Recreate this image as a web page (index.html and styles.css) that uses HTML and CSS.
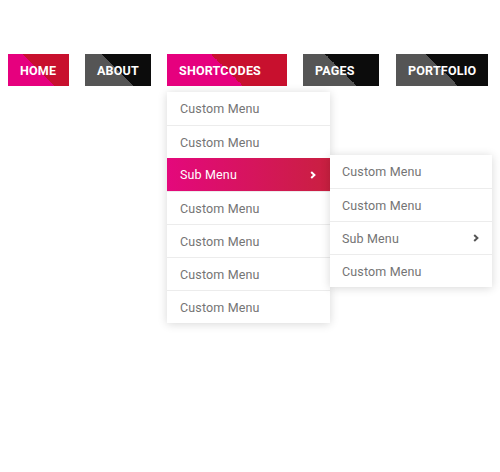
FILE: index.html
```html
<!DOCTYPE html>
<html>
<head>
<meta charset="utf-8">
<link rel="stylesheet" href="styles.css">
</head>
<body>
<nav class="nav">
  <ul class="menu">
    <li class="item w-home"><a class="btn btn-red" href="#">HOME</a></li>
    <li class="item w-about"><a class="btn btn-dark" href="#">ABOUT</a></li>
    <li class="item w-short">
      <a class="btn btn-red" href="#">SHORTCODES</a>
      <ul class="dropdown">
        <li class="dd-item"><a href="#">Custom Menu</a></li>
        <li class="dd-item"><a href="#">Custom Menu</a></li>
        <li class="dd-item has-sub">
          <a class="active" href="#">Sub Menu<svg class="chev" viewBox="0 0 6 8" width="6" height="8"><polyline points="1.2,1 4.4,4 1.2,7" fill="none" stroke="currentColor" stroke-width="2"/></svg></a>
          <ul class="dropdown sub">
            <li class="dd-item"><a href="#">Custom Menu</a></li>
            <li class="dd-item"><a href="#">Custom Menu</a></li>
            <li class="dd-item"><a href="#">Sub Menu<svg class="chev dark" viewBox="0 0 6 8" width="6" height="8"><polyline points="1.2,1 4.4,4 1.2,7" fill="none" stroke="currentColor" stroke-width="2"/></svg></a></li>
            <li class="dd-item"><a href="#">Custom Menu</a></li>
          </ul>
        </li>
        <li class="dd-item"><a href="#">Custom Menu</a></li>
        <li class="dd-item"><a href="#">Custom Menu</a></li>
        <li class="dd-item"><a href="#">Custom Menu</a></li>
        <li class="dd-item"><a href="#">Custom Menu</a></li>
      </ul>
    </li>
    <li class="item w-pages"><a class="btn btn-dark" href="#">PAGES</a></li>
    <li class="item w-port"><a class="btn btn-dark" href="#">PORTFOLIO</a></li>
  </ul>
</nav>
</body>
</html>
```
FILE: styles.css
```css
* { box-sizing: border-box; }
html, body { margin: 0; padding: 0; background: #fff; }
body { width: 500px; height: 472px; font-family: Roboto, "Liberation Sans", sans-serif; }
ul { list-style: none; margin: 0; padding: 0; }
a { text-decoration: none; }

.nav { padding: 54px 0 0 8px; }
.menu { display: flex; gap: 16px; }
.item { position: relative; height: 32px; }
.w-home { width: 61px; }
.w-about { width: 66px; }
.w-short { width: 120px; }
.w-pages { width: 76px; }
.w-port { width: 92px; margin-left: 1px; }

.btn {
  display: flex;
  align-items: center;
  height: 32px;
  padding-left: 12px;
  color: #fff;
  font-weight: 700;
  font-size: 12.5px;
  letter-spacing: 0.2px;
}
.btn-red { background: linear-gradient(45deg, #e6007e 50%, #c8102e 50%); }
.btn-dark { background: linear-gradient(45deg, #555555 50%, #0c0c0c 50%); }

.dropdown {
  position: absolute;
  top: 38px;
  left: 0;
  width: 163px;
  background: #fff;
  box-shadow: 0 1px 9px rgba(0, 0, 0, 0.16);
  z-index: 2;
}
.dropdown.sub { top: -4px; left: 163px; width: 162px; }
.dd-item { position: relative; border-top: 1px solid #ececec; }
.dd-item:first-child { border-top: none; }
.dd-item > a {
  display: flex;
  align-items: center;
  justify-content: space-between;
  height: 32px;
  padding: 0 14px 0 13px;
  color: #747474;
  font-size: 12.5px;
  letter-spacing: 0.15px;
}
.dd-item:first-child > a { height: 33px; }
.sub .dd-item > a { padding-left: 12px; padding-right: 13px; }
.dd-item > a.active {
  color: #fff;
  background: linear-gradient(to right, #e4087c, #c92040);
  margin-top: -1px;
  height: 33px;
}
.chev { color: #fff; display: block; }
.chev.dark { color: #555; }
```
